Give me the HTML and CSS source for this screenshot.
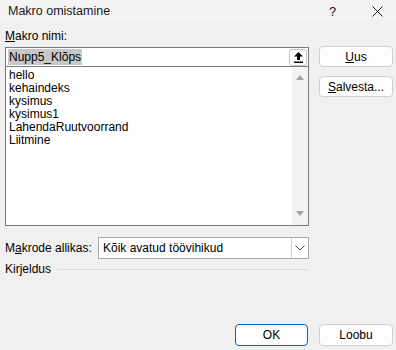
FILE: index.html
```html
<!DOCTYPE html>
<html>
<head>
<meta charset="UTF-8">
<title>Makro omistamine</title>
<link rel="stylesheet" href="styles.css">
</head>
<body>
  <div class="titlebar">
    <span class="title">Makro omistamine</span>
    <span class="help">?</span>
    <span class="close">
      <svg width="11" height="11" viewBox="0 0 11 11"><path d="M0.5 0.5 L10.5 10.5 M10.5 0.5 L0.5 10.5" stroke="#1a1a1a" stroke-width="1" fill="none"/></svg>
    </span>
  </div>

  <div class="main">
    <div class="left">
      <div class="label"><u>M</u>akro nimi:</div>
      <div class="name-box">
        <span class="name-text">Nupp5_Klõps</span>
        <span class="up-btn">
          <svg width="9" height="11" viewBox="0 0 9 11"><path d="M4.5 0 L9 4.5 L6 4.5 L6 8 L3 8 L3 4.5 L0 4.5 Z" fill="#000"/><rect x="0" y="9.5" width="9" height="1.5" fill="#000"/></svg>
        </span>
      </div>
      <div class="list">
        <div class="items">
          <div>hello</div>
          <div>kehaindeks</div>
          <div>kysimus</div>
          <div>kysimus1</div>
          <div>LahendaRuutvoorrand</div>
          <div>Liitmine</div>
        </div>
        <div class="scroll">
          <span class="tri-up"></span>
          <span class="tri-down"></span>
        </div>
      </div>
      <div class="source-row">
        <span class="source-label">M<u>a</u>krode allikas:</span>
        <div class="select">
          <span class="select-text">Kõik avatud töövihikud</span>
          <span class="select-btn">
            <svg width="10" height="6" viewBox="0 0 10 6"><path d="M0.5 0.5 L5 5 L9.5 0.5" stroke="#444" stroke-width="1" fill="none"/></svg>
          </span>
        </div>
      </div>
      <div class="desc-row">
        <span>Kirjeldus</span>
        <span class="desc-line"></span>
      </div>
    </div>
    <div class="right">
      <div class="btn"><u>U</u>us</div>
      <div class="btn"><u>S</u>alvesta...</div>
    </div>
  </div>

  <div class="footer">
    <div class="btn ok">OK</div>
    <div class="btn">Loobu</div>
  </div>
</body>
</html>
```

FILE: styles.css
```css
* {
	margin: 0;
	padding: 0;
	box-sizing: border-box;
}

body {
	width: 396px;
	height: 350px;
	background: #f0f0f0;
	font-family: "Liberation Sans", Arial, sans-serif;
	font-size: 12px;
	color: #000;
	display: flex;
	flex-direction: column;
	overflow: hidden;
}

u {
	text-decoration: underline;
	text-underline-offset: 1px;
}

.titlebar {
	height: 22px;
	display: flex;
	align-items: center;
	padding-left: 8px;
	background: #f3f3f3;
}

.title {
	flex: 1;
	font-size: 12.5px;
	color: #1a1a1a;
}

.help {
	width: 43px;
	text-align: left;
	color: #1a1a1a;
	font-size: 13px;
}

.close {
	width: 24px;
	display: flex;
	align-items: center;
}

.main {
	display: flex;
	gap: 10px;
	padding: 0 3px 0 5px;
}

.left {
	width: 304px;
}

.label {
	margin-top: 7px;
	line-height: 14px;
	height: 14px;
	margin-bottom: 4px;
}

.name-box {
	height: 20px;
	border: 1px solid #7a7a7a;
	background: #fff;
	display: flex;
	align-items: center;
	padding-left: 2px;
}

.name-text {
	background: #c8c8c8;
	padding: 1px 1px;
}

.name-box .up-btn {
	margin-left: auto;
	margin-right: 1px;
	width: 18px;
	height: 17px;
	border: 1px solid #c4c4c4;
	border-radius: 3px;
	background: #fff;
	display: flex;
	align-items: center;
	justify-content: center;
}

.list {
	height: 160px;
	margin-top: -1px;
	border: 1px solid #7a7a7a;
	background: #fff;
	display: flex;
}

.items {
	flex: 1;
	padding: 2px 0 0 3px;
	line-height: 13px;
}

.scroll {
	width: 16px;
	background: #f3f3f3;
	display: flex;
	flex-direction: column;
	align-items: center;
	justify-content: space-between;
	padding: 8px 0 9px;
}

.tri-up {
	width: 0;
	height: 0;
	border-left: 4px solid transparent;
	border-right: 4px solid transparent;
	border-bottom: 5px solid #a3a3a3;
}

.tri-down {
	width: 0;
	height: 0;
	border-left: 4px solid transparent;
	border-right: 4px solid transparent;
	border-top: 5px solid #a3a3a3;
}

.source-row {
	display: flex;
	align-items: center;
	margin-top: 11px;
}

.source-label {
	width: 93px;
}

.select {
	flex: 1;
	height: 22px;
	border: 1px solid #a8a8a8;
	background: #fff;
	display: flex;
	align-items: center;
	padding-left: 4px;
}

.select-text {
	flex: 1;
}

.select-btn {
	width: 17px;
	height: 20px;
	border-left: 1px solid #d0d0d0;
	display: flex;
	align-items: center;
	justify-content: center;
}

.desc-row {
	display: flex;
	align-items: center;
	gap: 6px;
	margin-top: 2px;
	height: 16px;
}

.desc-line {
	flex: 1;
	height: 1px;
	background: #dadada;
}

.right {
	width: 74px;
	padding-top: 24px;
	display: flex;
	flex-direction: column;
	gap: 9px;
}

.btn {
	width: 74px;
	height: 21px;
	border: 1px solid #d0d0d0;
	border-radius: 4px;
	background: #fdfdfd;
	display: flex;
	align-items: center;
	justify-content: center;
}

.footer {
	margin-top: auto;
	display: flex;
	justify-content: flex-end;
	gap: 11px;
	padding: 0 3px 4px 0;
}

.footer .btn {
	height: 22px;
}

.btn.ok {
	width: 73px;
	border-color: #0067c0;
}
```
